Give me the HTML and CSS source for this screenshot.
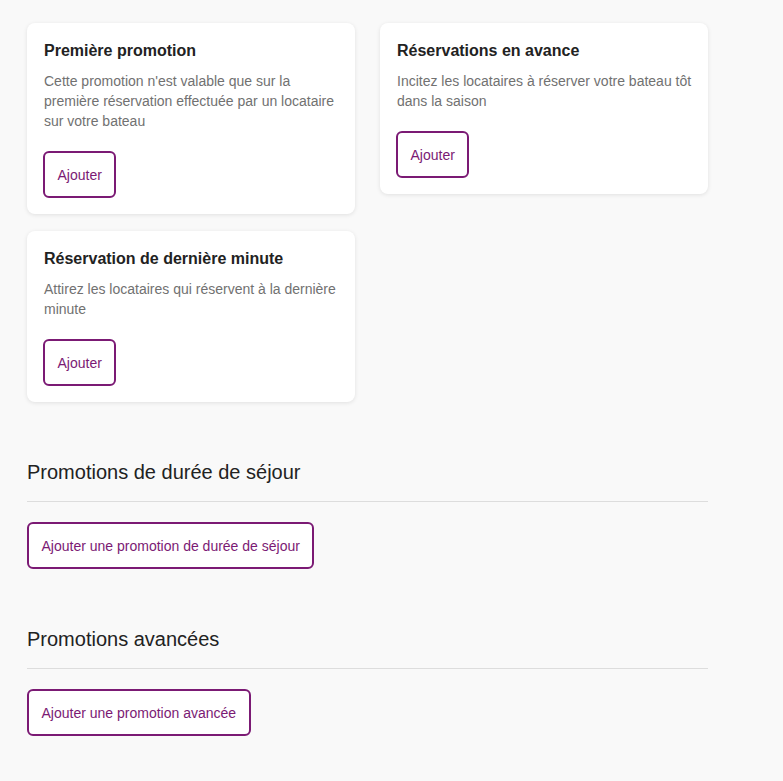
FILE: index.html
```html
<!DOCTYPE html>
<html lang="fr">
  <head>
    <meta charset="UTF-8" />
    <meta name="viewport" content="width=device-width, initial-scale=1.0" />
    <title>Promotions</title>
    <link rel="stylesheet" href="styles.css">
  </head>
  <body>
    <div class="page">
      <div class="cards">
        <div class="card">
          <h3>Première promotion</h3>
          <p>Cette promotion n'est valable que sur la première réservation effectuée par un locataire sur votre bateau</p>
          <button type="button">Ajouter</button>
        </div>
        <div class="card">
          <h3>Réservations en avance</h3>
          <p>Incitez les locataires à réserver votre bateau tôt dans la saison</p>
          <button type="button">Ajouter</button>
        </div>
        <div class="card">
          <h3>Réservation de dernière minute</h3>
          <p>Attirez les locataires qui réservent à la dernière minute</p>
          <button type="button">Ajouter</button>
        </div>
      </div>

      <div class="section">
        <h2>Promotions de durée de séjour</h2>
        <button type="button">Ajouter une promotion de durée de séjour</button>
      </div>

      <div class="section">
        <h2>Promotions avancées</h2>
        <button type="button">Ajouter une promotion avancée</button>
      </div>
    </div>
  </body>
</html>
```

FILE: styles.css
```css
/* Reset some default styles */
body,
h2,
h3,
p {
  margin: 0;
  padding: 0;
}

body {
  font-family: "Liberation Sans", Arial, sans-serif;
  background-color: #f9f9f9;
  color: #222;
}

.page {
  width: 681px;
  padding: 23px 0 40px 27px;
}

.cards {
  display: grid;
  grid-template-columns: 328px 328px;
  column-gap: 25px;
  row-gap: 17px;
  align-items: start;
}

.card {
  background-color: #fff;
  border-radius: 8px;
  box-shadow: 0 1px 4px rgba(0, 0, 0, 0.1);
  padding: 16px 14px 16px 17px;
}

.card h3 {
  font-size: 16px;
  font-weight: bold;
  line-height: 24px;
  color: #222;
  margin-bottom: 8px;
}

.card p {
  font-size: 14px;
  line-height: 20px;
  color: #717171;
  margin-bottom: 20px;
}

.card button {
  margin-left: -1px;
}

button {
  display: block;
  font-family: "Liberation Sans", Arial, sans-serif;
  font-size: 14px;
  line-height: 20px;
  color: #7b1a74;
  background-color: #fff;
  border: 2px solid #7b1a74;
  border-radius: 6px;
  padding: 11.5px 12.5px;
  cursor: pointer;
}

/* Styles for the lower sections */
.section {
  margin-top: 56px;
}

.section h2 {
  font-size: 20px;
  font-weight: normal;
  line-height: 28px;
  color: #222;
  padding-bottom: 15px;
  border-bottom: 1px solid #ddd;
  margin-bottom: 20px;
}
```
